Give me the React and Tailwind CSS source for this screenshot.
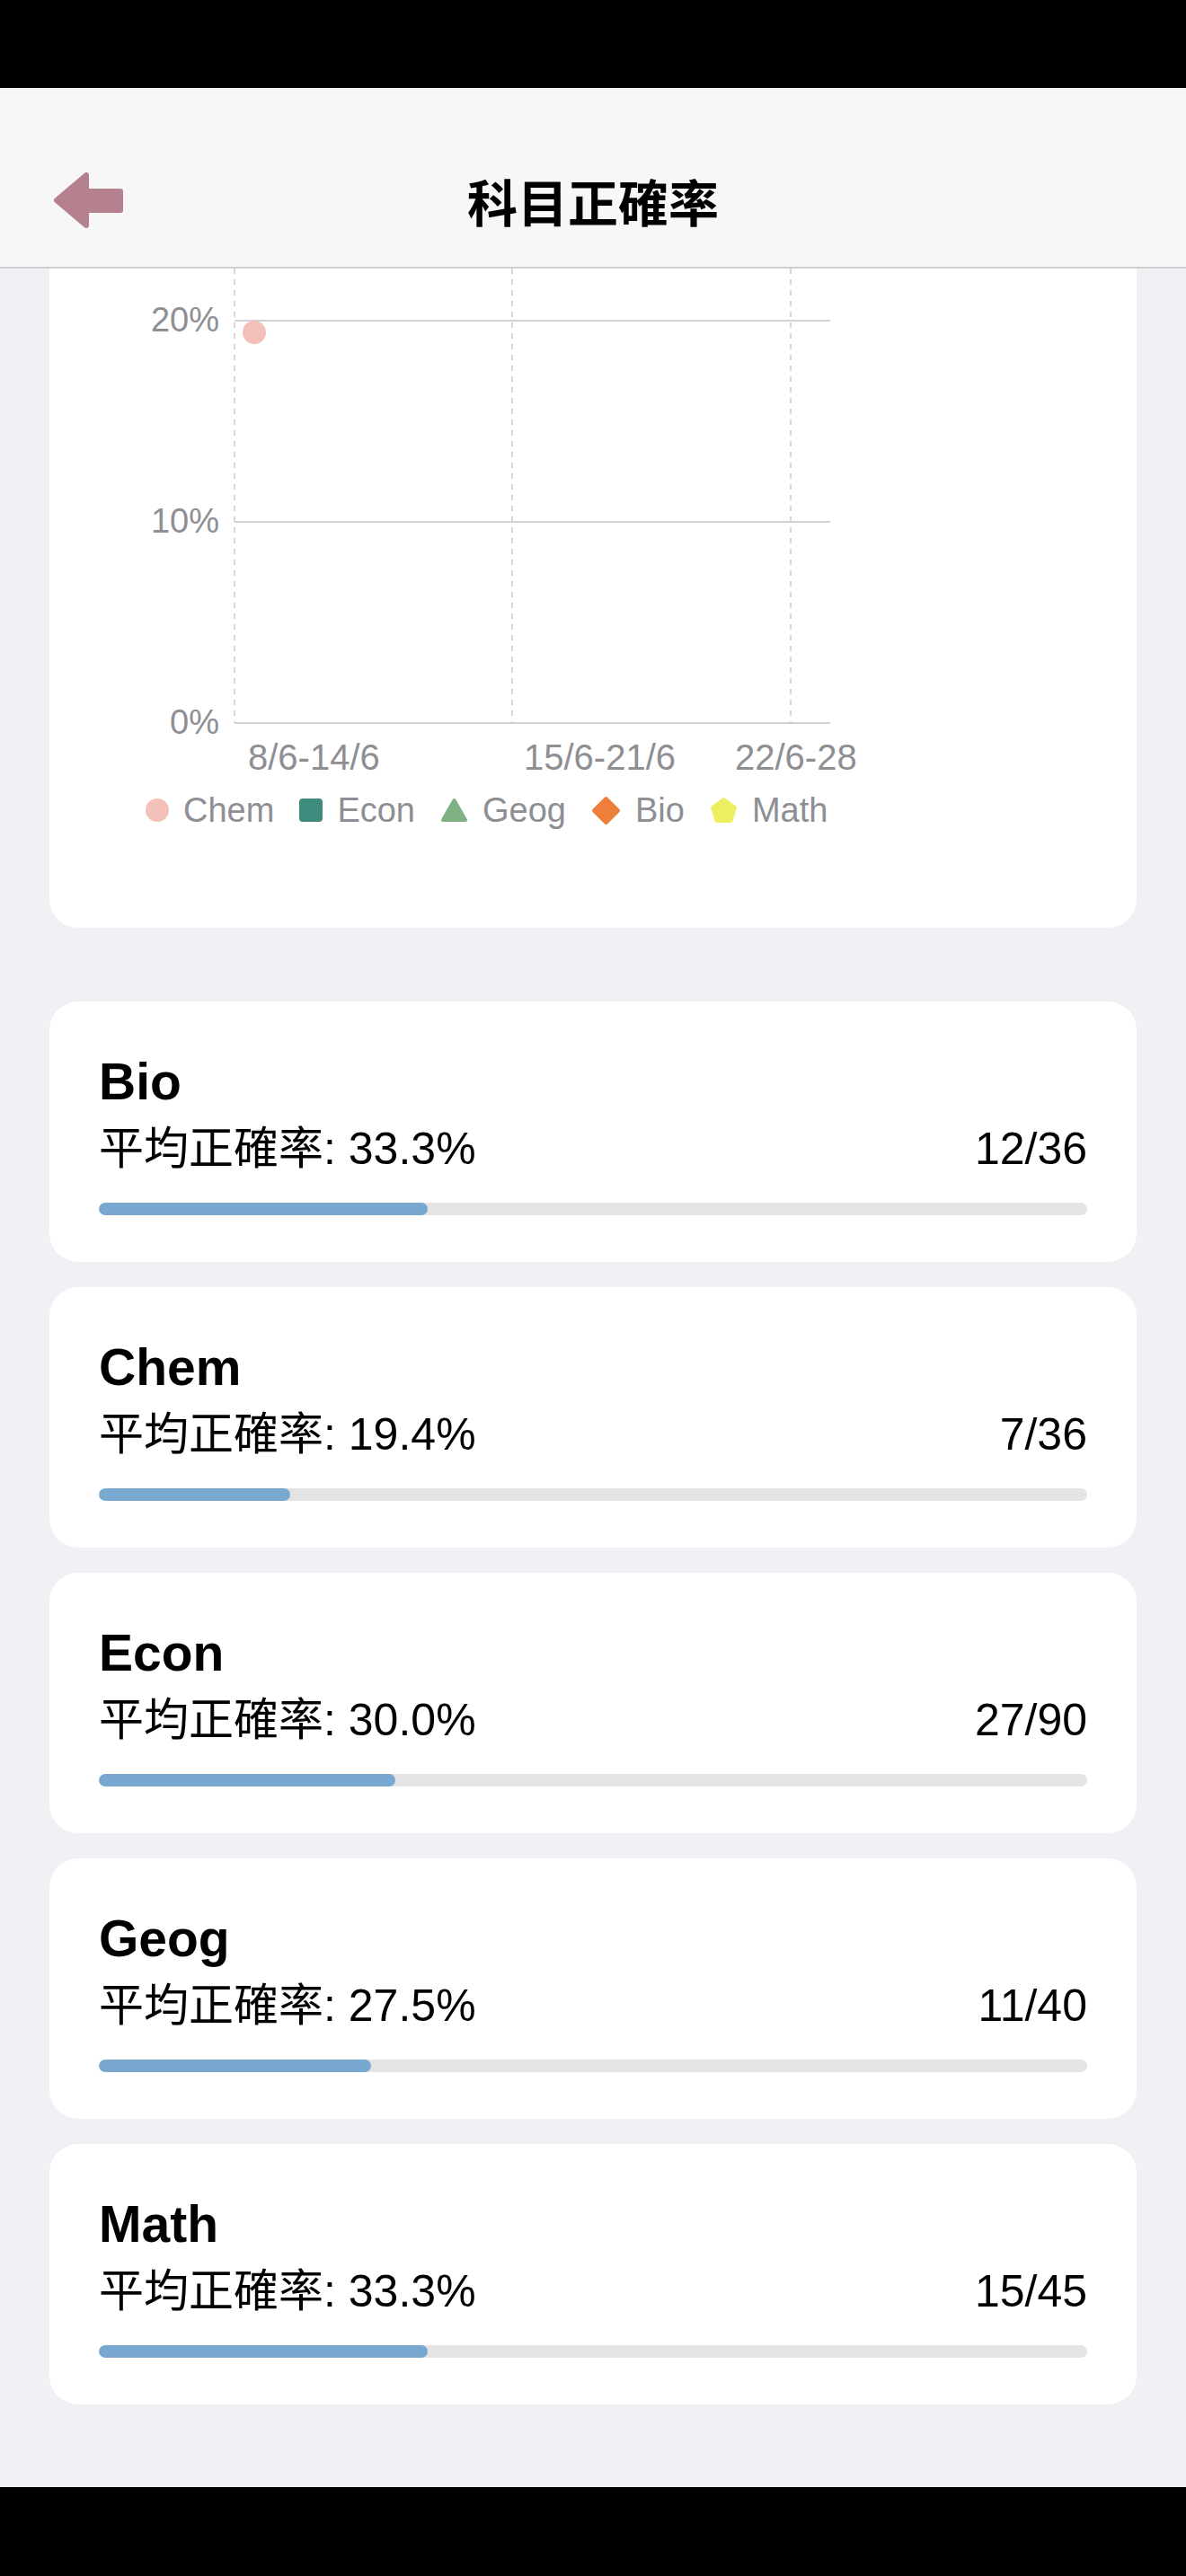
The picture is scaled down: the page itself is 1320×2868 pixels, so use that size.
import React from "react";

const subjects = [
  { name: "Bio", pct: 33.3, frac: "12/36" },
  { name: "Chem", pct: 19.4, frac: "7/36" },
  { name: "Econ", pct: 30.0, frac: "27/90" },
  { name: "Geog", pct: 27.5, frac: "11/40" },
  { name: "Math", pct: 33.3, frac: "15/45" },
];

const sans = { fontFamily: '"Liberation Sans", "Noto Sans CJK TC", sans-serif' };

function BackArrow() {
  return (
    <svg width="82" height="68" viewBox="0 0 82 68" className="block">
      <path
        d="M5 33 L38 5 L38 23 L76 23 L76 44 L38 44 L38 61 Z"
        fill="#b5818e"
        stroke="#b5818e"
        strokeWidth="6"
        strokeLinejoin="round"
      />
    </svg>
  );
}

function Chart() {
  const grid = "#d2d2d2";
  const label = "#8e8e93";
  return (
    <svg width="903" height="584" viewBox="0 0 903 584" className="block overflow-hidden">
      {[206, 515, 825].map((x) => (
        <line key={x} x1={x} y1="0" x2={x} y2="506" stroke="#c9c9c9" strokeWidth="1.5" strokeDasharray="6 6" />
      ))}
      {[58, 282, 506].map((y) => (
        <line key={y} x1="206" y1={y} x2="869" y2={y} stroke={grid} strokeWidth="2" />
      ))}
      <g fill={label} fontSize="38" fontFamily='"Liberation Sans", sans-serif' textAnchor="end">
        <text x="189" y="70">20%</text>
        <text x="189" y="294">10%</text>
        <text x="189" y="518">0%</text>
      </g>
      <g fill={label} fontSize="40" fontFamily='"Liberation Sans", sans-serif'>
        <text x="221" y="558">8/6-14/6</text>
        <text x="528" y="558">15/6-21/6</text>
        <text x="763" y="558">22/6-28</text>
      </g>
      <circle cx="228" cy="71" r="13" fill="#f4bfb8" />
    </svg>
  );
}

function LegendIcon({ kind }) {
  if (kind === "circle")
    return <span className="block h-[26px] w-[26px] rounded-full bg-[#f4c1ba]" />;
  if (kind === "square")
    return <span className="block h-[26px] w-[26px] rounded-[4px] bg-[#3e8a7d]" />;
  if (kind === "triangle")
    return (
      <svg width="31" height="28" viewBox="0 0 31 28" className="block">
        <path d="M15.5 3 L28 25 L3 25 Z" fill="#80b182" stroke="#80b182" strokeWidth="4" strokeLinejoin="round" />
      </svg>
    );
  if (kind === "diamond")
    return (
      <svg width="33" height="33" viewBox="0 0 33 33" className="block">
        <path d="M16.5 3 L30 16.5 L16.5 30 L3 16.5 Z" fill="#ee7f3a" stroke="#ee7f3a" strokeWidth="4" strokeLinejoin="round" />
      </svg>
    );
  return (
    <svg width="31" height="31" viewBox="0 0 31 31" className="block">
      <path d="M15.5 3 L28 12 L23.5 27 L7.5 27 L3 12 Z" fill="#ecf060" stroke="#ecf060" strokeWidth="4" strokeLinejoin="round" />
    </svg>
  );
}

const legend = [
  { kind: "circle", name: "Chem" },
  { kind: "square", name: "Econ" },
  { kind: "triangle", name: "Geog" },
  { kind: "diamond", name: "Bio" },
  { kind: "pentagon", name: "Math" },
];

function SubjectCard({ s }) {
  return (
    <div className="mx-[55px] flex h-[290px] flex-col rounded-[32px] bg-white px-[55px] pt-[61px]">
      <div className="text-[57px] font-bold leading-[57px] text-black">{s.name}</div>
      <div className="mt-[21px] flex items-center justify-between text-[50px] leading-[50px] text-black">
        <span>平均正確率: {s.pct.toFixed(1)}%</span>
        <span>{s.frac}</span>
      </div>
      <div className="mt-[35px] h-[14px] w-full overflow-hidden rounded-full bg-[#e4e4e6]">
        <div className="h-full rounded-full bg-[#78a7d0]" style={{ width: `${s.pct}%` }} />
      </div>
    </div>
  );
}

export default function App() {
  return (
    <div className="flex h-[2868px] w-[1320px] flex-col bg-[#f0f0f5]" style={sans}>
      <div className="h-[98px] shrink-0 bg-black" />
      <div className="relative z-10 h-[201px] shrink-0 border-b-2 border-[#cfcfcf] bg-[#f7f7f7] pt-[75px]">
        <div className="relative flex h-[100px] items-center justify-center">
          <div className="absolute left-[58px] top-[17px]">
            <BackArrow />
          </div>
          <span
            className="text-[56px] font-bold leading-[100px] text-black"
            style={{ fontFamily: '"Noto Sans CJK TC", sans-serif' }}
          >
            科目正確率
          </span>
        </div>
      </div>
      <div className="flex h-[2470px] shrink-0 flex-col overflow-hidden">
        <div className="mx-[55px] h-[734px] shrink-0 rounded-b-[32px] bg-white">
          <Chart />
          <div className="flex h-[38px] items-center pl-[107px] text-[38px] leading-[38px] text-[#8e8e93]">
            {legend.map((l, i) => (
              <div key={l.name} className={"flex items-center gap-[16px] " + (i > 0 ? "ml-[28px]" : "")}>
                <LegendIcon kind={l.kind} />
                <span>{l.name}</span>
              </div>
            ))}
          </div>
        </div>
        <div className="mt-[82px] flex flex-col gap-[28px]">
          {subjects.map((s) => (
            <SubjectCard key={s.name} s={s} />
          ))}
        </div>
      </div>
      <div className="h-[99px] shrink-0 bg-black" />
    </div>
  );
}
